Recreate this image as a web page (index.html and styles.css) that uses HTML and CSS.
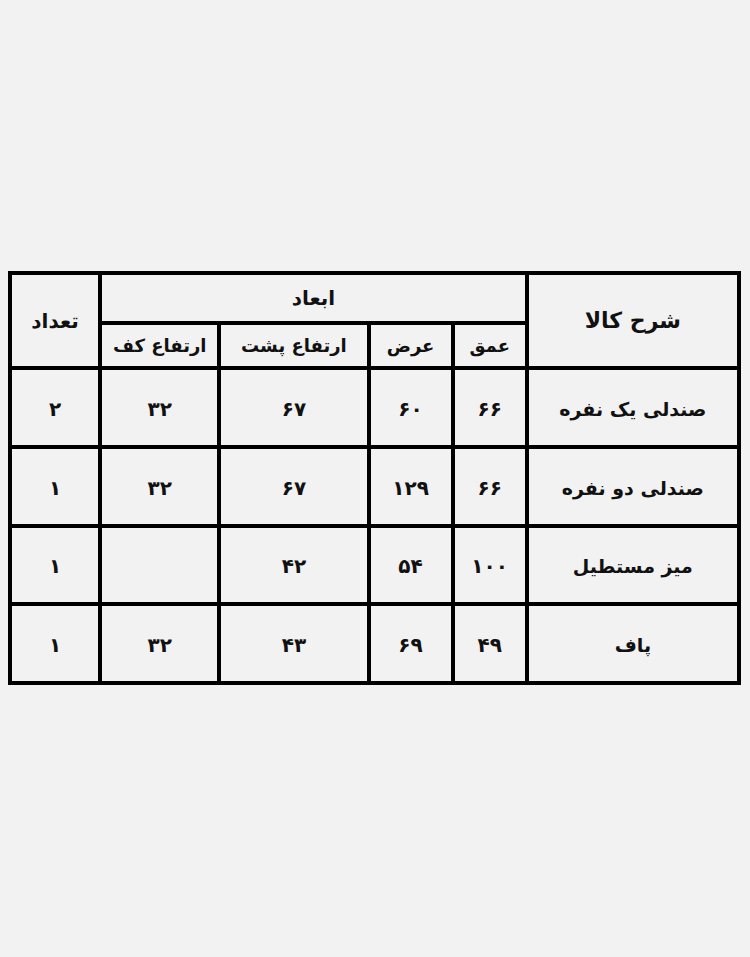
FILE: index.html
```html
<!DOCTYPE html>
<html lang="fa" dir="rtl">
<head>
<meta charset="utf-8">
<link rel="stylesheet" href="styles.css">
</head>
<body>
<div class="page">
  <table class="spec">
    <colgroup>
      <col class="c-desc">
      <col class="c-depth">
      <col class="c-width">
      <col class="c-back">
      <col class="c-floor">
      <col class="c-count">
    </colgroup>
    <thead>
      <tr class="h1">
        <th rowspan="2" class="title">شرح کالا</th>
        <th colspan="4">ابعاد</th>
        <th rowspan="2">تعداد</th>
      </tr>
      <tr class="h2">
        <th>عمق</th>
        <th>عرض</th>
        <th>ارتفاع پشت</th>
        <th>ارتفاع کف</th>
      </tr>
    </thead>
    <tbody>
      <tr class="r1">
        <td class="name">صندلی یک نفره</td>
        <td>۶۶</td>
        <td>۶۰</td>
        <td>۶۷</td>
        <td>۳۲</td>
        <td>۲</td>
      </tr>
      <tr class="r2">
        <td class="name">صندلی دو نفره</td>
        <td>۶۶</td>
        <td>۱۲۹</td>
        <td>۶۷</td>
        <td>۳۲</td>
        <td>۱</td>
      </tr>
      <tr class="r3">
        <td class="name">میز مستطیل</td>
        <td>۱۰۰</td>
        <td>۵۴</td>
        <td>۴۲</td>
        <td></td>
        <td>۱</td>
      </tr>
      <tr class="r4">
        <td class="name">پاف</td>
        <td>۴۹</td>
        <td>۶۹</td>
        <td>۴۳</td>
        <td>۳۲</td>
        <td>۱</td>
      </tr>
    </tbody>
  </table>
</div>
</body>
</html>
```

FILE: styles.css
```css
html, body {
  margin: 0;
  padding: 0;
  background: #f2f2f2;
}
.page {
  width: 750px;
  height: 957px;
  padding-top: 271px;
  padding-right: 9px;
  box-sizing: border-box;
}
.spec {
  border-collapse: collapse;
  table-layout: fixed;
  width: 733px;
  font-family: "DejaVu Sans", sans-serif;
  font-weight: bold;
  font-size: 20px;
  color: #111;
}
.spec th, .spec td {
  border: 4px solid #000;
  padding: 0;
  text-align: center;
  vertical-align: middle;
  font-weight: bold;
}
.spec td { padding-top: 2px; }
.spec .title { font-size: 22px; }
.spec .name { font-size: 19px; }
.h2 th { font-size: 18px; }
.c-desc { width: 212px; }
.c-depth { width: 74px; }
.c-width { width: 84px; }
.c-back { width: 149px; }
.c-floor { width: 119px; }
.c-count { width: 90px; }
.h1 { height: 50px; }
.h2 { height: 45px; }
.r1 { height: 79px; }
.r2 { height: 79px; }
.r3 { height: 78px; }
.r4 { height: 79px; }
```
